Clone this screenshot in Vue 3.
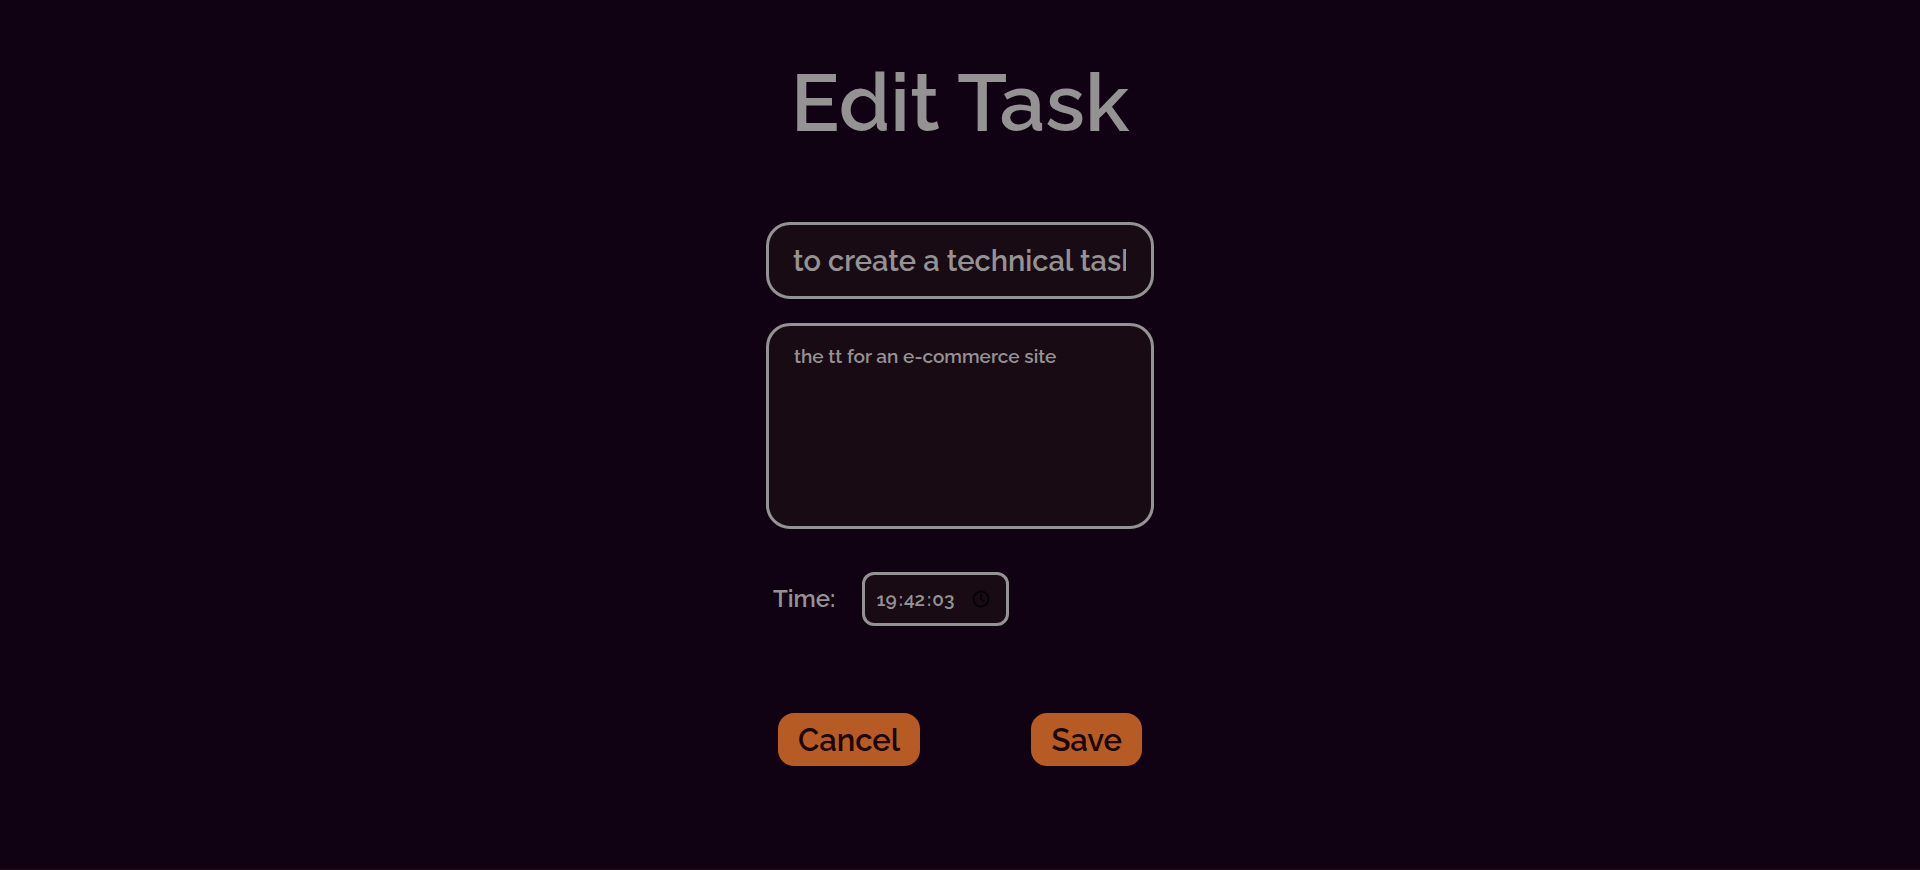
<script setup>
import { ref } from 'vue'

const title = ref('to create a technical task')
const description = ref('the tt for an e-commerce site')
const hours = ref('19')
const minutes = ref('42')
const seconds = ref('03')
</script>

<template>
  <main class="page">
    <form class="task-form" @submit.prevent>
      <h1 class="heading">Edit Task</h1>
      <input v-model="title" class="field title-field" type="text" aria-label="Title" />
      <textarea v-model="description" class="field description-field" aria-label="Description"></textarea>
      <div class="time-row">
        <label class="time-label" for="task-hours">Time:</label>
        <div class="time-box">
          <div class="time-parts">
            <input id="task-hours" v-model="hours" class="part" type="text" maxlength="2" />
            <span class="colon">:</span>
            <input v-model="minutes" class="part" type="text" maxlength="2" aria-label="Minutes" />
            <span class="colon">:</span>
            <input v-model="seconds" class="part" type="text" maxlength="2" aria-label="Seconds" />
          </div>
          <button class="clock" type="button" aria-label="Pick a time">
            <svg viewBox="0 0 18 18" fill="none" stroke="currentColor" stroke-width="2">
              <circle cx="9" cy="9" r="7.5" />
              <path d="M9 4v5l3.5 3" stroke-width="1.5" />
            </svg>
          </button>
        </div>
      </div>
      <div class="actions">
        <button class="action" type="button">Cancel</button>
        <button class="action" type="submit">Save</button>
      </div>
    </form>
  </main>
</template>

<style>
body {
  margin: 0;
  background: #110213;
}
</style>

<style scoped>
.page {
  box-sizing: border-box;
  min-height: 100vh;
  display: flex;
  justify-content: center;
  background: #110213;
  border-bottom: 1px solid #23101c;
  color: #959294;
  font-family: Raleway, Lato, sans-serif;
  font-weight: 600;
}

input,
textarea,
button {
  box-sizing: border-box;
  margin: 0;
  color: inherit;
  font: inherit;
}

.task-form {
  width: 388px;
  max-width: 100%;
  display: flex;
  flex-direction: column;
  padding-top: 55px;
}

.heading {
  margin: 0 0 71px;
  font-size: 81px;
  line-height: 96px;
  font-weight: 600;
  text-align: center;
  white-space: nowrap;
}

.field {
  width: 100%;
  padding: 18px 25px;
  border: 3px solid #959294;
  border-radius: 24px;
  background: #180b14;
  outline: none;
}

.title-field {
  height: 77px;
  margin-bottom: 24px;
  padding-left: 24px;
  font-size: 29px;
}

.description-field {
  height: 206px;
  margin-bottom: 43px;
  font-size: 19px;
  line-height: 24px;
  resize: none;
}

.time-row {
  display: flex;
  align-items: center;
  gap: 27px;
  padding-left: 7px;
  margin-bottom: 87px;
}

.time-label {
  font-size: 24px;
  line-height: 32px;
}

.time-box {
  box-sizing: border-box;
  width: 147px;
  height: 54px;
  display: flex;
  align-items: center;
  justify-content: space-between;
  padding: 0 16px 0 10px;
  border: 3px solid #959294;
  border-radius: 12px;
  background: #180b14;
}

.time-parts {
  display: flex;
  align-items: center;
  font-size: 19px;
  line-height: 24px;
}

.part {
  field-sizing: content;
  padding: 0 1px;
  border: 0;
  background: transparent;
  outline: none;
}

.colon {
  padding-left: 1px;
  font-feature-settings: "case";
}

.clock {
  width: 18px;
  height: 18px;
  padding: 0;
  border: 0;
  background: transparent;
  color: #07020a;
}

.clock svg {
  display: block;
  width: 100%;
  height: 100%;
}

.actions {
  display: flex;
  justify-content: space-between;
  padding: 0 12px;
}

.action {
  height: 53px;
  padding: 0 20px;
  border: 0;
  border-radius: 16px;
  background: #b75b24;
  color: #1a0508;
  font-size: 31px;
}
</style>
